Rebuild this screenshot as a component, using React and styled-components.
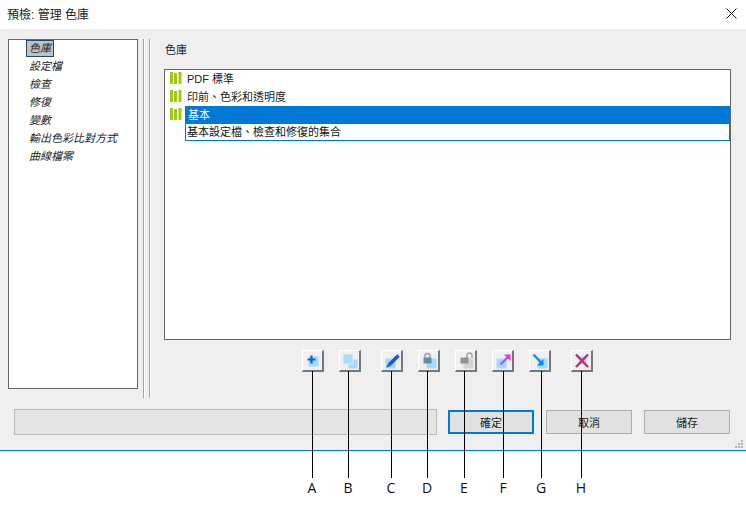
import styled, { createGlobalStyle } from "styled-components";

const Global = createGlobalStyle`
  html, body {
    margin: 0;
    padding: 0;
    background: #fff;
  }
  body {
    font-family: "Open Sans", "Noto Sans CJK TC", sans-serif;
    font-size: 11px;
    color: #1a1a1a;
  }
`;

const cjk = `"Liberation Sans", "Noto Sans CJK TC", sans-serif`;

const Page = styled.div`
  width: 746px;
  height: 508px;
  overflow: hidden;
  position: relative;
`;

const TitleBar = styled.div`
  height: 29px;
  display: flex;
  align-items: center;
  justify-content: space-between;
  padding: 0 9px 2px 7px;
  box-sizing: border-box;
  font: 12px ${cjk};
  color: #222;
`;

const Dialog = styled.div`
  height: 422px;
  background: #efefef;
  border-bottom: 1px solid #0078d7;
  padding: 10px 0 0 8px;
  box-sizing: border-box;
  position: relative;
`;

const Panes = styled.div`
  display: flex;
  height: 370px;
`;

const Nav = styled.ul`
  width: 130px;
  height: 350px;
  box-sizing: border-box;
  border: 1px solid #666;
  background: #fff;
  margin: 0;
  padding: 0 0 0 17px;
  list-style: none;
`;

const NavItem = styled.li`
  height: 18px;
  display: flex;
  align-items: flex-start;
  font: italic 11px ${cjk};
  color: #222;
`;

const NavLabel = styled.span`
  padding: 0 2px;
  line-height: 15px;
  border: 1px solid ${(p) => (p.$active ? "#1d4a72" : "transparent")};
  background: ${(p) => (p.$active ? "#c2c2c2" : "transparent")};
`;

const Divider = styled.div`
  width: 2px;
  height: 359px;
  background: linear-gradient(90deg, #a3a3a3 50%, #fff 50%);
  margin-left: ${(p) => p.$gap}px;
`;

const Main = styled.div`
  margin-left: 13px;
  display: flex;
  flex-direction: column;
  width: 567px;
`;

const SectionLabel = styled.div`
  height: 30px;
  padding-left: 1px;
  font: 11px/23px ${cjk};
  color: #222;
`;

const LibraryList = styled.div`
  height: 271px;
  box-sizing: border-box;
  border: 1px solid #666;
  background: #fff;
`;

const Row = styled.div`
  display: flex;
  align-items: flex-start;
  min-height: 18px;
  padding-left: 5px;
`;

const RowBody = styled.div`
  flex: 1;
  margin-left: 3px;
  ${(p) => p.$selected && "border: 1px solid #0078d7; border-top: 0;"}
`;

const RowTitle = styled.div`
  height: 18px;
  padding-left: 2px;
  font: 11px/18px ${cjk};
  color: ${(p) => (p.$selected ? "#fff" : "#222")};
  background: ${(p) => (p.$selected ? "#0078d7" : "transparent")};
`;

const RowNote = styled.div`
  height: 16px;
  padding-left: 1px;
  font: 11px/16px ${cjk};
  color: #111;
`;

const BarIconBox = styled.svg`
  width: 12px;
  height: 12px;
  margin-top: 2px;
  flex: none;
`;

const Toolbar = styled.div`
  display: flex;
  margin-top: 10px;
  padding-left: 138px;
`;

const ToolButton = styled.button`
  position: relative;
  width: 22px;
  height: 22px;
  padding: 0;
  margin-left: ${(p) => p.$gap}px;
  box-sizing: border-box;
  background: #f0f0f0;
  border-style: solid;
  border-width: 1px 2px 2px 1px;
  border-color: #fff #777 #777 #fff;
  display: flex;
  align-items: center;
  justify-content: center;
`;

const Callout = styled.span`
  position: absolute;
  top: 20px;
  left: ${(p) => p.$x}px;
  width: 1px;
  height: 107px;
  background: #000;
  z-index: 3;
`;

const CalloutLabel = styled.span`
  position: absolute;
  top: 127px;
  left: ${(p) => p.$x}px;
  width: 20px;
  margin-left: -10px;
  text-align: center;
  font: 14px/20px "Open Sans", sans-serif;
  color: #111;
`;

const Footer = styled.div`
  display: flex;
  align-items: center;
  height: 26px;
  padding-left: 6px;
`;

const StatusBox = styled.div`
  width: 423px;
  height: 26px;
  flex: none;
  box-sizing: border-box;
  border: 1px solid #b9b9b9;
  background: #e4e4e4;
  margin-right: 11px;
`;

const DialogButton = styled.button`
  width: 86px;
  height: 24px;
  flex: none;
  margin-right: 12px;
  padding: 0;
  box-sizing: border-box;
  background: #e1e1e1;
  border: ${(p) => (p.$primary ? "2px solid #0078d7" : "1px solid #adadad")};
  font: 11px ${cjk};
  color: #222;
`;

const Grip = styled.svg`
  position: absolute;
  right: 2px;
  bottom: 1px;
  width: 10px;
  height: 10px;
`;

const BarIcon = () => (
  <BarIconBox viewBox="0 0 12 12">
    <path d="M0 0h3v12H0zM4 1h3v11H4zM8.5 0h3v12h-3z" fill="#a0c814" />
  </BarIconBox>
);

const Sq = ({ x, y, w = 10, h = 10, c = "#9fdcfb" }) => <rect x={x} y={y} width={w} height={h} fill={c} />;

const Ico = styled.svg`
  width: 18px;
  height: 18px;
`;

const icons = {
  add: (
    <>
      <Sq x={4.5} y={4.5} />
      <path d="M7.5 3.5v8M3.5 7.5h8" stroke="#1c55d6" strokeWidth="2.2" fill="none" />
    </>
  ),
  duplicate: (
    <>
      <Sq x={7.5} y={7.5} w={9} h={9} />
      <rect x={2} y={2} width={10} height={10} fill="#a4dffb" stroke="#efefef" />
    </>
  ),
  edit: (
    <>
      <Sq x={2.5} y={6.5} />
      <path d="M6 13L15.5 3.5" stroke="#1c55d6" strokeWidth="3.6" fill="none" />
      <path d="M3.5 15.5l1-3.5 2.5 2.5z" fill="#1c55d6" />
    </>
  ),
  lock: (
    <>
      <Sq x={6.5} y={6.5} />
      <path d="M5 6V4a2.5 2.5 0 0 1 5 0v2" stroke="#8ea6b4" strokeWidth="1.6" fill="none" />
      <rect x={3.5} y={5.5} width={8} height={6} fill="#5f8ea6" />
    </>
  ),
  unlock: (
    <>
      <Sq x={6.5} y={6.5} c="#d4d4d4" />
      <path d="M10 6V3.5a2.4 2.4 0 0 1 5 0V6" stroke="#a3a3a3" strokeWidth="1.5" fill="none" />
      <rect x={3.5} y={5.5} width={8} height={6} fill="#909090" />
    </>
  ),
  exportTo: (
    <>
      <Sq x={2.5} y={6.5} />
      <path d="M6.5 12.5L14 5" stroke="#d63bf0" strokeWidth="2.2" fill="none" />
      <path d="M10 2.5h6.5V9z" fill="#d63bf0" />
    </>
  ),
  importFrom: (
    <>
      <Sq x={6.5} y={6.5} />
      <path d="M2.5 2.5L10.5 11" stroke="#0b87f5" strokeWidth="2.2" fill="none" />
      <path d="M12.5 7v6.5H6z" fill="#0b87f5" />
    </>
  ),
  remove: (
    <>
      <Sq x={5.5} y={4.5} w={8} h={8} />
      <path d="M3 2.5l12 12.5M15 2.5L3 15" stroke="#c2305f" strokeWidth="2.4" fill="none" />
    </>
  ),
};

const tools = [
  { id: "add", gap: 0, label: "A", x: 9 },
  { id: "duplicate", gap: 15, label: "B", x: 8 },
  { id: "edit", gap: 20, label: "C", x: 9 },
  { id: "lock", gap: 15, label: "D", x: 8 },
  { id: "unlock", gap: 15, label: "E", x: 8 },
  { id: "exportTo", gap: 15, label: "F", x: 10 },
  { id: "importFrom", gap: 15, label: "G", x: 11 },
  { id: "remove", gap: 20, label: "H", x: 9 },
];

const navItems = ["色庫", "設定檔", "檢查", "修復", "變數", "輸出色彩比對方式", "曲線檔案"];

export default function App() {
  return (
    <Page>
      <Global />
      <TitleBar>
        <span>預檢: 管理 色庫</span>
        <svg width="11" height="11" viewBox="0 0 11 11">
          <path d="M.5.5l10 10M10.5.5l-10 10" stroke="#111" strokeWidth="1" fill="none" />
        </svg>
      </TitleBar>
      <Dialog>
        <Panes>
          <Nav>
            {navItems.map((n, i) => (
              <NavItem key={n}>
                <NavLabel $active={i === 0}>{n}</NavLabel>
              </NavItem>
            ))}
          </Nav>
          <Divider $gap={5} />
          <Divider $gap={4} />
          <Main>
            <SectionLabel>色庫</SectionLabel>
            <LibraryList>
              <Row>
                <BarIcon />
                <RowBody>
                  <RowTitle>PDF 標準</RowTitle>
                </RowBody>
              </Row>
              <Row>
                <BarIcon />
                <RowBody>
                  <RowTitle>印前、色彩和透明度</RowTitle>
                </RowBody>
              </Row>
              <Row>
                <BarIcon />
                <RowBody $selected>
                  <RowTitle $selected>基本</RowTitle>
                  <RowNote>基本設定檔、檢查和修復的集合</RowNote>
                </RowBody>
              </Row>
            </LibraryList>
            <Toolbar>
              {tools.map((t) => (
                <ToolButton key={t.id} $gap={t.gap}>
                  <Ico viewBox="0 0 18 18">{icons[t.id]}</Ico>
                  <Callout $x={t.x} />
                  <CalloutLabel $x={t.x}>{t.label}</CalloutLabel>
                </ToolButton>
              ))}
            </Toolbar>
          </Main>
        </Panes>
        <Footer>
          <StatusBox />
          <DialogButton $primary>確定</DialogButton>
          <DialogButton>取消</DialogButton>
          <DialogButton>儲存</DialogButton>
        </Footer>
        <Grip viewBox="0 0 10 10">
          <path d="M7 1h2v2H7zM4 4h2v2H4zM7 4h2v2H7zM1 7h2v2H1zM4 7h2v2H4zM7 7h2v2H7z" fill="#b5b5b5" />
        </Grip>
      </Dialog>
    </Page>
  );
}
